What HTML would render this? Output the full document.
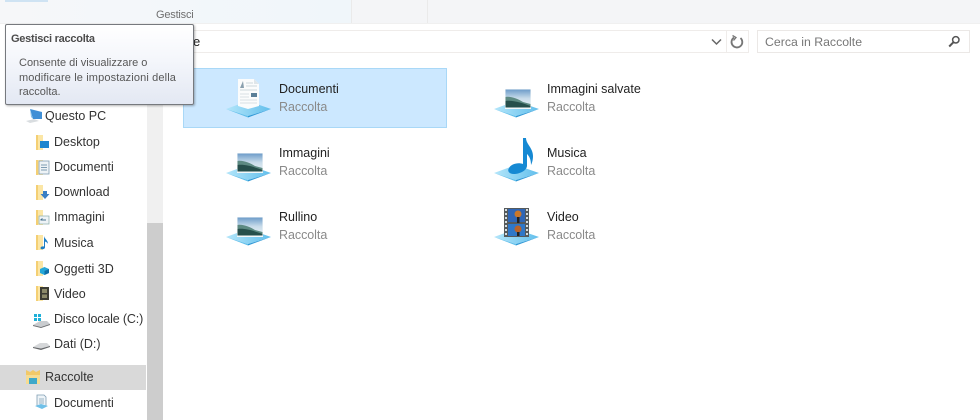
<!DOCTYPE html>
<html lang="it">
<head>
<meta charset="utf-8">
<title>Raccolte</title>
<style>
html,body{margin:0;padding:0;background:#fff}
body{width:980px;height:420px;position:relative;overflow:hidden;font-family:"Liberation Sans",Arial,sans-serif;font-size:13px;color:#2b2b2b}
.a{position:absolute;white-space:nowrap}
.n{position:absolute;white-space:nowrap;color:#333;font-size:12.5px;line-height:16px;margin-top:1px}
.t{position:absolute;white-space:nowrap;color:#222;font-size:12.5px;line-height:16px;margin-top:1px}
.s{position:absolute;white-space:nowrap;color:#8a8a8a;font-size:12.5px;line-height:16px;margin-top:1px;letter-spacing:-.05px}
svg{position:absolute;overflow:visible;filter:blur(.3px)}
</style>
</head>
<body>
<svg width="0" height="0" style="position:absolute">
<defs>
<linearGradient id="base" x1="0" y1="0" x2="1" y2="0"><stop offset="0" stop-color="#b4e6fa"/><stop offset="1" stop-color="#62bfec"/></linearGradient>
<linearGradient id="sky" x1="0" y1="0" x2="0" y2="1"><stop offset="0" stop-color="#6d9cc9"/><stop offset=".5" stop-color="#c9dcea"/><stop offset="1" stop-color="#e8f1f5"/></linearGradient>
<g id="plate"><path d="M0 37 L22 29 L45 37 L22 44 Z" fill="url(#base)"/><path d="M0 37 L22 44 L22 45.5 Z" fill="#62bfea"/><path d="M45 37 L22 44 L22 45.5 Z" fill="#2f98d6"/></g>
<g id="pic"><use href="#plate"/>
<rect x="11" y="17" width="26" height="20" fill="#f3f7f8"/><rect x="11.5" y="17.5" width="25" height="18" fill="url(#sky)"/>
<path d="M11.5 25 C17 24 24 27 29 30 L36.5 32 V35 H11.5 Z" fill="#5d8a82"/><path d="M11.5 29 C19 28 28 31 36.5 34 V35.5 H11.5 Z" fill="#264f4b"/></g>
<g id="fold"><path d="M0 1 H5 L7 3 V16 H0 Z" fill="#f4cf73"/><rect x="2" y="1" width="5" height="15" fill="#fbe6a6"/></g>
</defs>
</svg>

<!-- ribbon -->
<div class="a" style="left:0;top:0;width:980px;height:23px;background:#f4f5f7;border-bottom:1px solid #f0f0f0"></div>
<div class="a" style="left:0;top:0;width:351px;height:23px;background:linear-gradient(90deg,#f6f7f9 0,#f3f7fa 50%,#f0f6fa 100%)"></div>
<div class="a" style="left:5px;top:0;width:43px;height:2px;background:#cfe3f3"></div>
<div class="a" style="left:351px;top:0;width:1px;height:23px;background:#eaeaea"></div>
<div class="a" style="left:427px;top:0;width:1px;height:23px;background:#eaeaea"></div>
<div class="a" style="left:156px;top:8px;font-size:11px;line-height:14px;color:#6f6f6f;letter-spacing:-.2px">Gestisci</div>

<!-- address bar -->
<div class="a" style="left:150px;top:30px;width:596px;height:21px;background:#fff;border:1px solid #efecea"></div>
<div class="a" style="left:193px;top:34px;font-size:13px;line-height:16px;color:#222">e</div>
<svg style="left:711px;top:38px" width="11" height="8"><path d="M1 1.5 L5.5 6 L10 1.5" fill="none" stroke="#666" stroke-width="1.5"/></svg>
<div class="a" style="left:726px;top:30px;width:21px;height:21px;background:#fff;border:1px solid #efecea"></div>
<svg style="left:730px;top:35px" width="14" height="15"><path d="M4 2.5 A5.4 5.4 0 1 0 10.5 3" fill="none" stroke="#777" stroke-width="1.8"/><path d="M2.5 0.5 L6 2.5 L3.5 5.5" fill="none" stroke="#777" stroke-width="1.3"/></svg>
<div class="a" style="left:757px;top:30px;width:211px;height:21px;background:#fff;border:1px solid #ebe8e6"></div>
<div class="a" style="left:765px;top:34px;font-size:12.3px;line-height:16px;color:#777">Cerca in Raccolte</div>
<svg style="left:948px;top:35px" width="13" height="13"><circle cx="7.8" cy="4.8" r="3.2" fill="none" stroke="#555" stroke-width="1.5"/><path d="M5.5 7.2 L1.2 11.5" stroke="#555" stroke-width="2"/></svg>

<!-- sidebar scrollbar -->
<div class="a" style="left:147px;top:60px;width:16px;height:360px;background:#f0f0f0"></div>
<div class="a" style="left:147px;top:223px;width:16px;height:197px;background:#cdcdcd"></div>
<div class="a" style="left:0;top:365px;width:146px;height:25px;background:#d9d9d9"></div>

<!-- nav -->
<svg style="left:25px;top:108px" width="18" height="16"><path d="M5 1 L17 4 V11 L8 11 Z" fill="#3f8fd6"/><path d="M5 1 L8 11 L6 9 Z" fill="#8cc3ea"/><path d="M1 13 L9 11 L14 13 L5 15 Z" fill="#d9dde0"/></svg>
<div class="n" style="left:45px;top:107px">Questo PC</div>

<svg style="left:36px;top:134px" width="14" height="16"><use href="#fold"/><rect x="4" y="7" width="9" height="7" fill="#1e86cf"/></svg>
<div class="n" style="left:54px;top:133px">Desktop</div>
<svg style="left:36px;top:159px" width="14" height="16"><use href="#fold"/><rect x="3" y="2" width="10" height="13" fill="#eef3f6" stroke="#7f9db3" stroke-width=".8"/><path d="M5 6H11M5 8.5H11M5 11H11" stroke="#7f9db3"/></svg>
<div class="n" style="left:54px;top:158px">Documenti</div>
<svg style="left:36px;top:184px" width="14" height="16"><use href="#fold"/><path d="M7 7 H11 V10 H13.5 L9 15 L4.5 10 H7 Z" fill="#3a7fc4"/></svg>
<div class="n" style="left:54px;top:183px">Download</div>
<svg style="left:36px;top:209px" width="14" height="16"><use href="#fold"/><rect x="3" y="7" width="10" height="8" fill="#eef3f6" stroke="#8aa" stroke-width=".7"/><path d="M4.5 11 H10 M4.5 11 L6.5 9.5" stroke="#45708c"/></svg>
<div class="n" style="left:54px;top:208px">Immagini</div>
<svg style="left:36px;top:234px" width="14" height="18"><use href="#fold"/><path d="M8 2 C8.5 5 12 6 12 10 C11.5 8.5 10 8 9 7.5 V13.5 C9 15.5 4.5 16 4.5 14 C4.5 12.5 6.5 12 8 12.5 Z" fill="#1f7fc4"/></svg>
<div class="n" style="left:54px;top:234px">Musica</div>
<svg style="left:36px;top:260px" width="14" height="16"><use href="#fold"/><path d="M8.5 7 L13 9 V13 L8.5 15 L4 13 V9 Z" fill="#25a7d8"/><path d="M8.5 11 L13 9 V13 L8.5 15 Z" fill="#0f6fa8"/></svg>
<div class="n" style="left:54px;top:260px">Oggetti 3D</div>
<svg style="left:36px;top:285px" width="14" height="16"><use href="#fold"/><rect x="4" y="2" width="9" height="13" fill="#3c3c34"/><path d="M6 4H11V8H6ZM6 9.5H11V13H6Z" fill="#8c8a6a"/></svg>
<div class="n" style="left:54px;top:285px">Video</div>
<svg style="left:33px;top:313px" width="18" height="15"><path d="M1 1H4V4H1ZM5 1H8V4H5ZM1 5H4V8H1ZM5 5H8V8H5Z" fill="#1fb0d8"/><path d="M0 12 L7 8 H14 L17 11 L8 14 Z" fill="#c9cccf"/><path d="M0 12 L8 14 L17 11 V12 L8 15 L0 13 Z" fill="#6d6f72"/></svg>
<div class="n" style="left:54px;top:310px;letter-spacing:-.15px">Disco locale (C:)</div>
<svg style="left:33px;top:339px" width="18" height="12"><path d="M0 8 L7 4 H14 L17 7 L8 9.5 Z" fill="#d5d7d9"/><path d="M0 8 L8 9.5 L17 7 V8 L8 11 L0 9 Z" fill="#66686b"/></svg>
<div class="n" style="left:54px;top:335px">Dati (D:)</div>
<svg style="left:25px;top:369px" width="16" height="16"><path d="M1 1 L5 3 L8 1 L11 3 L15 1 V6 H1 Z" fill="#f2c968"/><rect x="1" y="6" width="14" height="9" fill="#f6dc92"/><rect x="4" y="9" width="8" height="6" fill="#3fa9c9"/></svg>
<div class="n" style="left:45px;top:368px">Raccolte</div>
<svg style="left:34px;top:394px" width="15" height="16"><path d="M3 1H10L12 3V12H3Z" fill="#eef4f8" stroke="#7f9db3" stroke-width=".8"/><path d="M5 5H10M5 7H10M5 9H10" stroke="#7f9db3" stroke-width=".8"/><path d="M1 12 L7 10 L14 12 L8 15 Z" fill="#6fc0e8"/></svg>
<div class="n" style="left:54px;top:394px">Documenti</div>

<!-- selected -->
<div class="a" style="left:183px;top:68px;width:262px;height:58px;background:#cce8ff;border:1px solid #a9d8f7"></div>

<!-- Documenti -->
<svg style="left:226px;top:72px" width="48" height="48"><use href="#plate"/><path d="M12 7 H28 L33 12 V34 L22 37 L12 34 Z" fill="#fbfcfc"/><path d="M28 7 L33 12 H28 Z" fill="#dfe6ea"/><path d="M14 16 L17 9 L18 16 Z" fill="#8aa0ae"/><path d="M20 11H27M20 14H31M14 18H31" stroke="#ced7dc"/><path d="M14 22H23M14 25H23M14 28H31M14 31H31" stroke="#d8dfe3"/><rect x="25" y="21" width="6" height="4" fill="#5b7f98"/></svg>
<div class="t" style="left:279px;top:80px">Documenti</div>
<div class="s" style="left:279px;top:98px">Raccolta</div>

<!-- Immagini -->
<svg style="left:226px;top:136px" width="48" height="48"><use href="#pic"/></svg>
<div class="t" style="left:279px;top:144px">Immagini</div>
<div class="s" style="left:279px;top:162px">Raccolta</div>

<!-- Rullino -->
<svg style="left:226px;top:200px" width="48" height="48"><use href="#pic"/></svg>
<div class="t" style="left:279px;top:208px">Rullino</div>
<div class="s" style="left:279px;top:226px">Raccolta</div>

<!-- Immagini salvate -->
<svg style="left:494px;top:72px" width="48" height="48"><use href="#pic"/></svg>
<div class="t" style="left:547px;top:80px">Immagini salvate</div>
<div class="s" style="left:547px;top:98px">Raccolta</div>

<!-- Musica -->
<svg style="left:494px;top:136px" width="48" height="48"><use href="#plate"/><path d="M29 2 H32 C32 8 39 12 39 20 C39 24 38 27 37 29 C37 23 35 20 33 18 L33 30 C32.5 35 25 38 20 38 C15 38 13 35 15 32 C17 28 24 26 29 28 Z" fill="#1689d3"/></svg>
<div class="t" style="left:547px;top:144px">Musica</div>
<div class="s" style="left:547px;top:162px">Raccolta</div>

<!-- Video -->
<svg style="left:494px;top:200px" width="48" height="48"><use href="#plate"/><rect x="10" y="8" width="25" height="29" fill="#555a5c"/><path d="M11 9h2v2h-2zM11 13h2v2h-2zM11 17h2v2h-2zM11 21h2v2h-2zM11 25h2v2h-2zM11 29h2v2h-2zM11 33h2v2h-2zM32 9h2v2h-2zM32 13h2v2h-2zM32 17h2v2h-2zM32 21h2v2h-2zM32 25h2v2h-2zM32 29h2v2h-2zM32 33h2v2h-2z" fill="#d6dde0"/><rect x="14" y="9" width="17" height="13" fill="#2f66b6"/><rect x="14" y="24" width="17" height="12" fill="#2f77c8"/><circle cx="24" cy="14" r="3.5" fill="#c9772a"/><circle cx="24" cy="29" r="3.5" fill="#b9632a"/><rect x="23" y="17" width="2.5" height="6" fill="#222"/><rect x="23" y="32" width="2.5" height="4" fill="#222"/></svg>
<div class="t" style="left:547px;top:208px">Video</div>
<div class="s" style="left:547px;top:226px">Raccolta</div>

<!-- tooltip -->
<div class="a" style="left:5px;top:24px;width:187px;height:79px;background:linear-gradient(180deg,#ffffff 0,#f4f6fb 45%,#e3e8f3 100%);border:1px solid #76797e;border-radius:2px;box-shadow:1px 1px 2px rgba(0,0,0,.3)"></div>
<div class="a" style="left:11px;top:32px;font-size:11px;line-height:14px;font-weight:bold;color:#4c4c4c;letter-spacing:-.25px">Gestisci raccolta</div>
<div class="a" style="left:19px;top:56px;font-size:11px;line-height:14.7px;color:#575757"><span>Consente di visualizzare o</span><br><span style="letter-spacing:.13px">modificare le impostazioni della</span><br><span>raccolta.</span></div>
</body>
</html>
